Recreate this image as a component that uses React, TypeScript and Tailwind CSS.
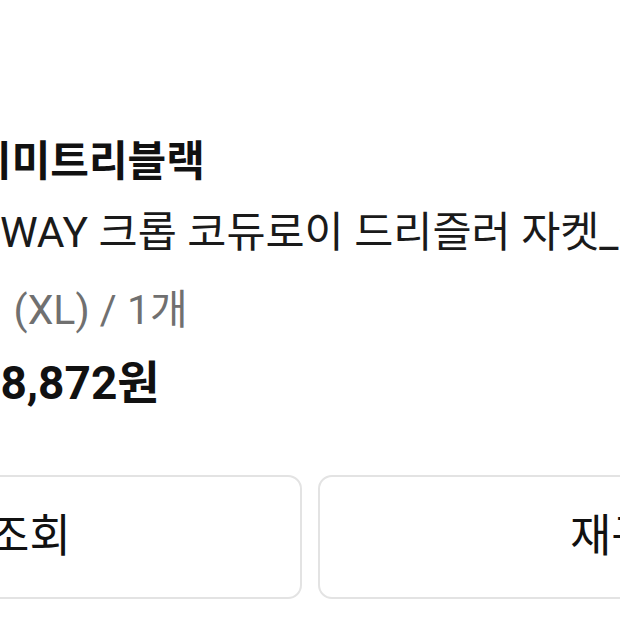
const FONT = "font-['Roboto','Noto_Sans_CJK_KR',sans-serif]"

export default function App() {
  return (
    <div className={`w-[620px] h-[620px] overflow-hidden bg-white ${FONT}`}>
      <div className="pt-[134px]">
        {/* product info */}
        <div className="whitespace-nowrap">
          <div className="-ml-[27px] h-[56px] leading-[56px] text-[42px] font-bold text-[#111111]">
            시미트리블랙
          </div>
          <div className="-ml-[24px] mt-[15px] h-[56px] leading-[56px] text-[42.5px] text-[#1a1a1a]">
            2WAY 크롭 코듀로이 드리즐러 자켓_블랙
          </div>
          <div className="-ml-[72px] mt-[21px] h-[56px] leading-[56px] text-[41px] text-[#707070]">
            블랙 (XL) / 1개
          </div>
          <div className="-ml-[26px] mt-[17px] h-[56px] leading-[56px] text-[46px] font-bold text-[#111111]">
            18,872원
          </div>
        </div>

        {/* actions */}
        <div className="-ml-[326px] mt-[64px] flex gap-[16px]">
          <button className="w-[628px] h-[124px] shrink-0 rounded-[14px] border-2 border-[#e3e3e3] bg-white text-[45px] text-[#111111]">
            배송조회
          </button>
          <button className="w-[628px] h-[124px] shrink-0 rounded-[14px] border-2 border-[#e3e3e3] bg-white text-[45px] text-[#111111]">
            재구매
          </button>
        </div>
      </div>
    </div>
  )
}
